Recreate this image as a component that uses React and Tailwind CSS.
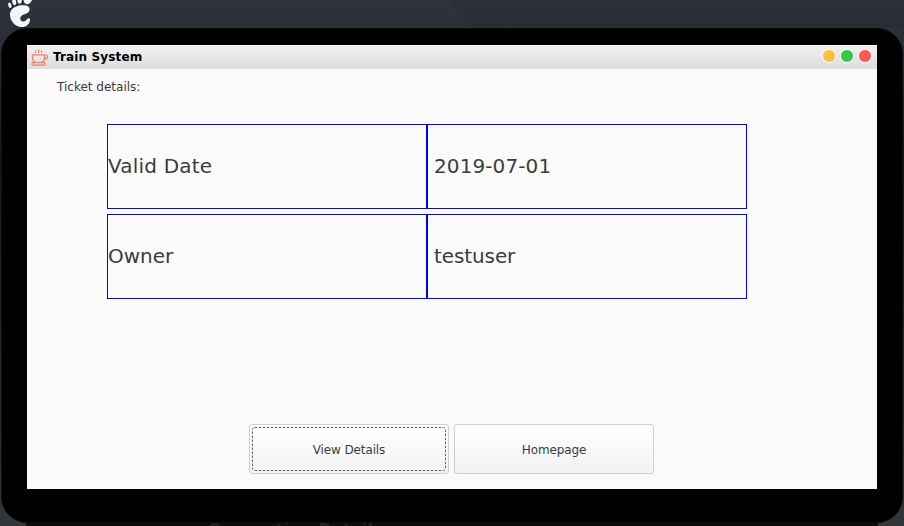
const rows = [
  { label: "Valid Date", value: "2019-07-01", labelSpacing: "tracking-[0.2px]", valueSpacing: "tracking-[0.1px]" },
  { label: "Owner", value: "testuser", labelSpacing: "tracking-normal", valueSpacing: "tracking-[-0.1px]" },
];

function Foot() {
  return (
    <svg className="ml-[7px] block h-[28px] w-[28px]" viewBox="7 0 28 28" fill="#f3f5f7">
      <ellipse cx="9.8" cy="5.3" rx="1.6" ry="2.8" transform="rotate(-18 9.8 5.3)" />
      <ellipse cx="14.200" cy="2" rx="1.900" ry="3.300" transform="rotate(-10 14.2 2)" />
      <ellipse cx="19.6" cy="-.2" rx="2.200" ry="4" />
      <ellipse cx="28" cy="-1.200" rx="4.200" ry="5.600" transform="rotate(22 28 -1.2)" />
      <path d="M29.600 9.500C29.900 6 26 4.800 21.500 5.300C15 6 10.300 9 10 14.200C9.700 20.500 15.200 27 21.800 27C26.500 27 29.400 24 30 20.200C30.300 18.200 28.700 17.800 27.600 18.800C26.300 20 24.900 22.200 22.300 21.400C19.500 20.500 19.600 16.600 22.600 15.100C25.500 13.700 29.300 13.300 29.600 9.500Z" />
    </svg>
  );
}

function Cup() {
  return (
    <svg className="h-[18px] w-[18px]" viewBox="0 0 18 18" fill="none" stroke="#f58066" strokeWidth="1.2">
      <path d="M4.500 1.500v2.500M7.500 .5v3.500M10.500 1.500v2.500" />
      <path d="M1 5.800H13.500V8.500C13.500 11.500 12 13.500 9.500 13.500H5.500C3 13.500 1.500 11.500 1.500 8.500V5.800M13.500 6H15Q16.500 6 16.500 8Q16.500 10 13.500 10M1.500 13.600H13.500Q14.800 16.200 13 16.200H2.500Q.3 16.200 1.500 13.600Z" />
    </svg>
  );
}

function Button({ children, focused }) {
  return (
    <button className="relative h-[50px] w-[200px] rounded-[3px] border border-[#d0d0d0] bg-linear-to-b from-white to-[#f2f2f2] pt-[2px] text-xs tracking-[-0.12px] text-[#3c3c3c]">
      {children}
      {focused && (
        <svg className="absolute top-[2px] left-[2px] h-[44px] w-[194px]" viewBox="0 0 194 44">
          <rect x=".5" y=".5" width="193" height="43" rx="2" fill="none" stroke="#666666" strokeDasharray="2.5 1.5" />
        </svg>
      )}
    </button>
  );
}

export default function App() {
  return (
    <div className="relative flex h-[526px] w-[904px] flex-col overflow-hidden bg-linear-to-b from-[#2d3038] from-6% via-[#15181c] via-30% to-[#34373a] font-['DejaVu_Sans',sans-serif]">
      <div className="flex h-7 shrink-0 bg-linear-to-b from-[#2d3039] to-[#292c35]">
        <div className="h-7 w-[472px] bg-linear-to-b from-[#30333c] to-[#2c2f38] [clip-path:polygon(0_0,446px_0,472px_28px,0_28px)]">
          <Foot />
        </div>
      </div>
      <div className="mx-px h-[495px] shrink-0 rounded-[26px] border border-[#0b0c0d] bg-black px-[25px] pt-4">
        <main className="flex h-[444px] w-[850px] flex-col bg-[#fafafa]">
          <header className="flex h-6 shrink-0 items-center border-t border-white bg-linear-to-b from-[#efefef] to-[#dedede] pl-1">
            <Cup />
            <h1 className="mb-[2px] ml-1 text-xs leading-[14px] font-bold tracking-[0.14px] text-black">Train System</h1>
            <div className="mr-[5px] mb-[3px] ml-auto flex gap-1">
              <span className="h-[14px] w-[14px] rounded-full border border-white bg-[#ffbc40]" />
              <span className="h-[14px] w-[14px] rounded-full border border-white bg-[#34c749]" />
              <span className="h-[14px] w-[14px] rounded-full border border-white bg-[#ff5858]" />
            </div>
          </header>
          <p className="mt-[10px] ml-[30px] h-4 text-xs leading-4 text-[#3c3c3c]">Ticket details:</p>
          <section className="mt-[29px] ml-20 flex flex-col gap-[5px] text-[20px] text-[#3c3c3c]">
            {rows.map((row) => (
              <div key={row.label} className="flex h-[85px]">
                <div className={`flex w-[320px] items-center border border-[#0000ff] pb-px ${row.labelSpacing}`}>{row.label}</div>
                <div className={`flex w-[320px] items-center border border-[#0000ff] pb-px pl-[6px] ${row.valueSpacing}`}>{row.value}</div>
              </div>
            ))}
          </section>
          <footer className="mt-[125px] ml-[222px] flex gap-[5px]">
            <Button focused>View Details</Button>
            <Button>Homepage</Button>
          </footer>
        </main>
      </div>
      <div className="mx-[26px] h-[3px] shrink-0 overflow-hidden bg-[#0b0c0d]">
        <p className="-mt-[4px] ml-[182px] font-['Open_Sans',sans-serif] text-[18.5px] leading-[20px] font-bold whitespace-nowrap text-[#202122]">Connection Details</p>
      </div>
    </div>
  );
}
